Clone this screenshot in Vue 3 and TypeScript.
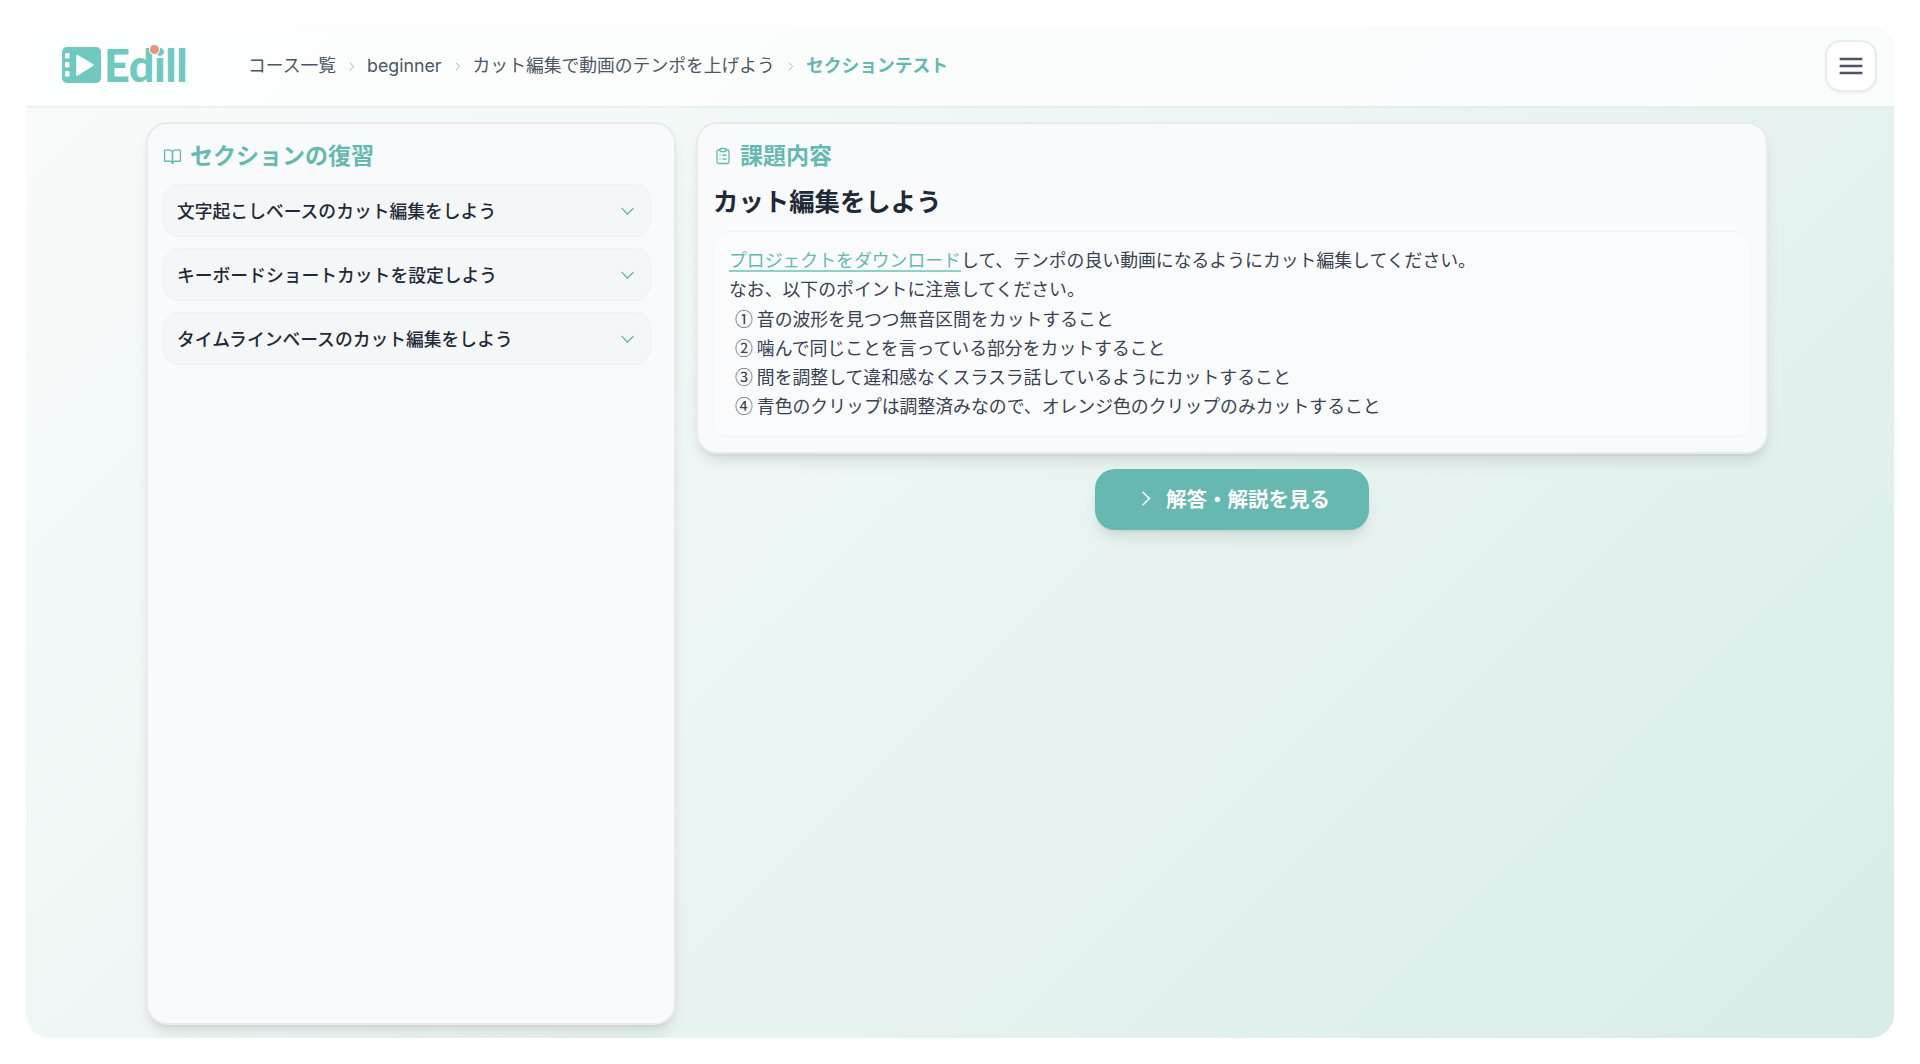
<script setup lang="ts">
const crumbs: string[] = ['コース一覧', 'beginner', 'カット編集で動画のテンポを上げよう']
const items: string[] = [
  '文字起こしベースのカット編集をしよう',
  'キーボードショートカットを設定しよう',
  'タイムラインベースのカット編集をしよう',
]
const points: string[] = [
  '① 音の波形を見つつ無音区間をカットすること',
  '② 噛んで同じことを言っている部分をカットすること',
  '③ 間を調整して違和感なくスラスラ話しているようにカットすること',
  '④ 青色のクリップは調整済みなので、オレンジ色のクリップのみカットすること',
]
</script>

<template>
  <div class="page">
    <div class="frame">
      <header class="topbar">
        <div class="logo">
          <svg class="logo-mark" viewBox="0 0 39 36" width="39" height="36">
            <rect width="39" height="36" rx="5" fill="#6fc9c1" />
            <rect x="3" y="6" width="4.5" height="5.5" rx="0.8" fill="#fff" />
            <rect x="3" y="15" width="4.5" height="5.5" rx="0.8" fill="#fff" />
            <rect x="3" y="24" width="4.5" height="5.5" rx="0.8" fill="#fff" />
            <path d="M15 8.5 L31 18 L15 28 Z" fill="#fff" stroke="#fff" stroke-width="1.5" stroke-linejoin="round" />
          </svg>
          <span class="logo-text">Edill<i class="logo-dot"></i></span>
        </div>
        <nav class="crumbs">
          <template v-for="c in crumbs" :key="c">
            <span>{{ c }}</span>
            <svg class="sep" viewBox="0 0 24 24" width="13" height="13"><path d="M9 5l7 7-7 7" /></svg>
          </template>
          <span class="current">セクションテスト</span>
        </nav>
        <button class="menu" type="button" aria-label="menu">
          <svg viewBox="0 0 24 24" width="26" height="26"><path d="M2.5 6h21M2.5 12.5h21M2.5 19h21" transform="translate(-1 -0.5)" /></svg>
        </button>
      </header>

      <main class="content">
        <aside class="card side">
          <h2 class="card-head">
            <svg class="head-icon" viewBox="0 0 24 24" width="19" height="19">
              <path d="M2 4h6a4 4 0 0 1 4 4v13a3 3 0 0 0-3-3H2z" />
              <path d="M22 4h-6a4 4 0 0 0-4 4v13a3 3 0 0 1 3-3h7z" />
            </svg>
            セクションの復習
          </h2>
          <div class="accordion">
            <div v-for="item in items" :key="item" class="acc-item">
              <span>{{ item }}</span>
              <svg class="chev" viewBox="0 0 24 24" width="21" height="21"><path d="M5 9l7 7 7-7" /></svg>
            </div>
          </div>
        </aside>

        <section class="main-col">
          <div class="card task">
            <h2 class="card-head task-head">
              <svg class="head-icon" viewBox="0 0 24 24" width="18" height="18">
                <rect x="8" y="2" width="8" height="4" rx="1" />
                <path d="M16 4h2a2 2 0 0 1 2 2v14a2 2 0 0 1-2 2H6a2 2 0 0 1-2-2V6a2 2 0 0 1 2-2h2" />
                <path d="M12 11h4M12 16h4M8 11h.01M8 16h.01" />
              </svg>
              課題内容
            </h2>
            <h1 class="title">カット編集をしよう</h1>
            <div class="body-box">
              <p><a class="link">プロジェクトをダウンロード</a>して、テンポの良い動画になるようにカット編集してください。</p>
              <p>なお、以下のポイントに注意してください。</p>
              <p v-for="p in points" :key="p" class="point">{{ p }}</p>
            </div>
          </div>
          <button class="answer" type="button">
            <svg viewBox="0 0 24 24" width="23" height="23"><path d="M9 5l7 7-7 7" /></svg>
            <span>解答・解説を見る</span>
          </button>
        </section>
      </main>
    </div>
  </div>
</template>

<style>
html, body { margin: 0; background: #fff; }
</style>

<style scoped>
.page {
  box-sizing: border-box;
  height: 1064px;
  padding: 26px;
  background: #fff;
  font-family: Inter, "Noto Sans CJK JP", "Noto Sans", sans-serif;
  color: #374151;
}
.frame {
  height: 100%;
  border-radius: 24px;
  overflow: hidden;
  display: flex;
  flex-direction: column;
  background: linear-gradient(135deg, #f8fcfb 0%, #eef7f5 40%, #d9ecea 100%);
}
.topbar {
  box-sizing: border-box;
  height: 81px;
  flex: none;
  display: flex;
  align-items: center;
  padding: 0 17px 0 36px;
  background: rgba(255, 255, 255, 0.72);
  border-bottom: 1px solid #e6eeee;
  box-shadow: 0 1px 2px rgba(0, 0, 0, 0.03);
}
.logo {
  width: 186px;
  flex: none;
  display: flex;
  align-items: center;
  gap: 3px;
  margin-top: -2px;
}
.logo-mark { display: block; flex: none; }
.logo-text {
  position: relative;
  font-family: Lato, sans-serif;
  font-weight: 900;
  font-size: 45px;
  line-height: 36px;
  letter-spacing: -0.4px;
  color: #6fc9c1;
}
.logo-dot {
  position: absolute;
  left: 46px;
  top: -2px;
  width: 9px;
  height: 9px;
  border-radius: 50%;
  background: #f0937c;
  box-shadow: 0 0 0 1px #fbfdfd;
}
.crumbs {
  flex: 1;
  display: flex;
  align-items: center;
  gap: 9px;
  font-size: 17.8px;
  line-height: 26px;
  color: #4b5563;
}
.sep {
  flex: none;
  fill: none;
  stroke: #9ca3af;
  stroke-width: 1.6;
}
.current {
  color: #66b9b1;
  font-weight: 600;
}
.menu {
  box-sizing: border-box;
  width: 52px;
  height: 52px;
  margin-top: -1px;
  padding: 0;
  display: flex;
  align-items: center;
  justify-content: center;
  background: #fff;
  border: 2px solid #e8eaee;
  border-radius: 16px;
  box-shadow: 0 1px 2px rgba(0, 0, 0, 0.05);
}
.menu svg { fill: none; stroke: #4b5563; stroke-width: 2.3; }
.content {
  flex: 1;
  min-height: 0;
  display: flex;
  gap: 20px;
  padding: 15px 126px 13px 120px;
}
.card {
  box-sizing: border-box;
  background: #f9fafc;
  border: 2px solid #e8eaee;
  border-radius: 21px;
  box-shadow: 0 10px 15px -3px rgba(0, 0, 0, 0.1), 0 4px 6px -4px rgba(0, 0, 0, 0.1);
  padding: 15px 15px 15px;
}
.side {
  width: 530px;
  flex: none;
}
.card-head {
  margin: 0;
  height: 34px;
  display: flex;
  align-items: center;
  font-size: 23px;
  line-height: 34px;
  font-weight: 700;
  color: #66b9b1;
}
.task-head { padding-left: 1px; }
.head-icon {
  fill: none;
  stroke: #66b9b1;
  stroke-width: 1.7;
  margin-right: 8px;
  stroke-linecap: round;
  stroke-linejoin: round;
}
.accordion {
  margin-top: 11px;
  width: 488px;
  display: flex;
  flex-direction: column;
  gap: 11px;
}
.acc-item {
  box-sizing: border-box;
  height: 53px;
  display: flex;
  align-items: center;
  justify-content: space-between;
  padding: 0 12px 2px 13px;
  background: #f3f7f8;
  border: 1px solid #eef2f5;
  border-radius: 16px;
  font-size: 17.8px;
  font-weight: 500;
  color: #1f2937;
}
.chev {
  fill: none;
  stroke: #66b9b1;
  stroke-width: 1.6;
  margin-top: 2px;
}
.main-col {
  flex: 1;
  min-width: 0;
  display: flex;
  flex-direction: column;
  align-items: center;
  gap: 15px;
}
.task {
  width: 100%;
}
.title {
  margin: 12px 0 12px;
  font-size: 25.4px;
  line-height: 34px;
  font-weight: 700;
  color: #1f2937;
}
.body-box {
  padding: 14px 15px 16px 15px;
  background: #fafbfc;
  border: 1px solid #f1f3f5;
  border-radius: 14px;
  font-size: 17.85px;
  line-height: 29px;
  color: #374151;
}
.body-box p { margin: 0; }
.point {
  padding-left: 6px;
  font-family: "Noto Sans CJK JP", sans-serif;
}
.link {
  color: #66b9b1;
  text-decoration: underline;
  text-decoration-color: #8fd0c9;
  text-decoration-thickness: 2px;
  text-underline-offset: 3px;
}
.answer {
  width: 274px;
  height: 61px;
  flex: none;
  display: flex;
  align-items: center;
  justify-content: center;
  gap: 9px;
  padding: 0 0 4px;
  border: none;
  border-radius: 20px;
  background: #67b8b0;
  color: #fff;
  font: inherit;
  font-size: 20.5px;
  font-weight: 700;
  box-shadow: 0 10px 15px -3px rgba(0, 0, 0, 0.1), 0 4px 6px -4px rgba(0, 0, 0, 0.1);
}
.answer svg { fill: none; stroke: #fff; stroke-width: 1.7; margin-top: 2px; }
</style>
